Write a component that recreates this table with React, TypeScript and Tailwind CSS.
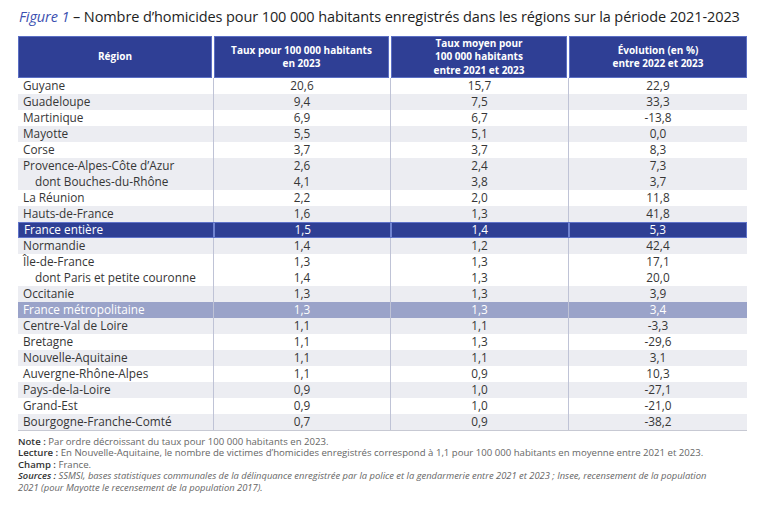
import React from "react";

type Row = { name: string; a: string; b: string; c: string; kind: "w" | "g" | "blue" | "light"; indent?: boolean };

const rows: Row[] = [
  { name: "Guyane", a: "20,6", b: "15,7", c: "22,9", kind: "w" },
  { name: "Guadeloupe", a: "9,4", b: "7,5", c: "33,3", kind: "g" },
  { name: "Martinique", a: "6,9", b: "6,7", c: "-13,8", kind: "w" },
  { name: "Mayotte", a: "5,5", b: "5,1", c: "0,0", kind: "g" },
  { name: "Corse", a: "3,7", b: "3,7", c: "8,3", kind: "w" },
  { name: "Provence-Alpes-Côte d’Azur", a: "2,6", b: "2,4", c: "7,3", kind: "g" },
  { name: "dont Bouches-du-Rhône", a: "4,1", b: "3,8", c: "3,7", kind: "g", indent: true },
  { name: "La Réunion", a: "2,2", b: "2,0", c: "11,8", kind: "w" },
  { name: "Hauts-de-France", a: "1,6", b: "1,3", c: "41,8", kind: "g" },
  { name: "France entière", a: "1,5", b: "1,4", c: "5,3", kind: "blue" },
  { name: "Normandie", a: "1,4", b: "1,2", c: "42,4", kind: "g" },
  { name: "Île-de-France", a: "1,3", b: "1,3", c: "17,1", kind: "w" },
  { name: "dont Paris et petite couronne", a: "1,4", b: "1,3", c: "20,0", kind: "w", indent: true },
  { name: "Occitanie", a: "1,3", b: "1,3", c: "3,9", kind: "g" },
  { name: "France métropolitaine", a: "1,3", b: "1,3", c: "3,4", kind: "light" },
  { name: "Centre-Val de Loire", a: "1,1", b: "1,1", c: "-3,3", kind: "g" },
  { name: "Bretagne", a: "1,1", b: "1,3", c: "-29,6", kind: "w" },
  { name: "Nouvelle-Aquitaine", a: "1,1", b: "1,1", c: "3,1", kind: "g" },
  { name: "Auvergne-Rhône-Alpes", a: "1,1", b: "0,9", c: "10,3", kind: "w" },
  { name: "Pays-de-la-Loire", a: "0,9", b: "1,0", c: "-27,1", kind: "g" },
  { name: "Grand-Est", a: "0,9", b: "1,0", c: "-21,0", kind: "w" },
  { name: "Bourgogne-Franche-Comté", a: "0,7", b: "0,9", c: "-38,2", kind: "g" },
];

function BodyRow({ r }: { r: Row }) {
  const bg =
    r.kind === "w"
      ? "bg-white text-[#363636]"
      : r.kind === "g"
      ? "bg-[#ecedf2] text-[#363636]"
      : r.kind === "blue"
      ? "bg-[#2e3f94] text-white"
      : "bg-[#9aa3c9] text-white";
  const edge = r.kind === "blue" ? "border border-[#5f73c9]" : "";
  const divider = r.kind === "blue" ? "border-l-2 border-[#6f82d0]" : "border-l border-[#bfc3d6]";
  return (
    <div className={`flex h-[16px] items-center text-[11.8px] leading-none ${bg} ${edge}`}>
      <div className={`w-[195px] ${r.indent ? "pl-[17px]" : "pl-[5px]"} whitespace-nowrap`}>{r.name}</div>
      <div className={`w-[177px] h-full flex items-center justify-center ${divider}`}>{r.a}</div>
      <div className={`w-[178px] h-full flex items-center justify-center ${divider}`}>{r.b}</div>
      <div className={`w-[179px] h-full flex items-center justify-center ${divider}`}>{r.c}</div>
    </div>
  );
}

export default function App() {
  return (
    <div
      className="w-[768px] h-[506px] bg-white overflow-hidden"
      style={{ fontFamily: '"Open Sans", "Noto Sans", sans-serif' }}
    >
      <div className="pl-[19px] pt-[6px] h-[36px] text-[14.5px] font-medium text-[#1e1e1e] whitespace-nowrap tracking-[-0.1px]">
        <span className="italic text-[#3b4fb0] font-normal">Figure 1</span> – Nombre d’homicides pour 100 000 habitants enregistrés dans les régions sur la période 2021-2023
      </div>
      <div className="ml-[18px] w-[729px]">
        <div className="flex h-[42px] gap-[2px] bg-white text-white font-bold text-[10px] leading-[13.5px] text-center">
          <div className="w-[194px] bg-[#2f3f95] border border-[#5b6fc4] flex items-center justify-center">Région</div>
          <div className="w-[175px] bg-[#2f3f95] border border-[#5b6fc4] flex items-center justify-center">
            Taux pour 100 000 habitants<br />en 2023
          </div>
          <div className="w-[176px] bg-[#2f3f95] border border-[#5b6fc4] flex items-center justify-center">
            Taux moyen pour<br />100 000 habitants<br />entre 2021 et 2023
          </div>
          <div className="w-[178px] bg-[#2f3f95] border border-[#5b6fc4] flex items-center justify-center">
            Évolution (en %)<br />entre 2022 et 2023
          </div>
        </div>
        <div className="border-b border-[#c7c9d3]">
          {rows.map((r) => (
            <BodyRow key={r.name} r={r} />
          ))}
        </div>
      </div>
      <div className="ml-[18px] mt-[5px] text-[9.6px] leading-[11.4px] text-[#666]">
        <div>
          <span className="font-semibold text-[#333]">Note :</span> Par ordre décroissant du taux pour 100 000 habitants en 2023.
        </div>
        <div>
          <span className="font-semibold text-[#333]">Lecture :</span> En Nouvelle-Aquitaine, le nombre de victimes d’homicides enregistrés correspond à 1,1 pour 100 000 habitants en moyenne entre 2021 et 2023.
        </div>
        <div>
          <span className="font-semibold text-[#333]">Champ :</span> France.
        </div>
        <div className="italic text-[9.4px]">
          <span className="font-semibold text-[#333]">Sources :</span> SSMSI, bases statistiques communales de la délinquance enregistrée par la police et la gendarmerie entre 2021 et 2023 ; Insee, recensement de la population
        </div>
        <div className="italic text-[9.4px]">2021 (pour Mayotte le recensement de la population 2017).</div>
      </div>
    </div>
  );
}
